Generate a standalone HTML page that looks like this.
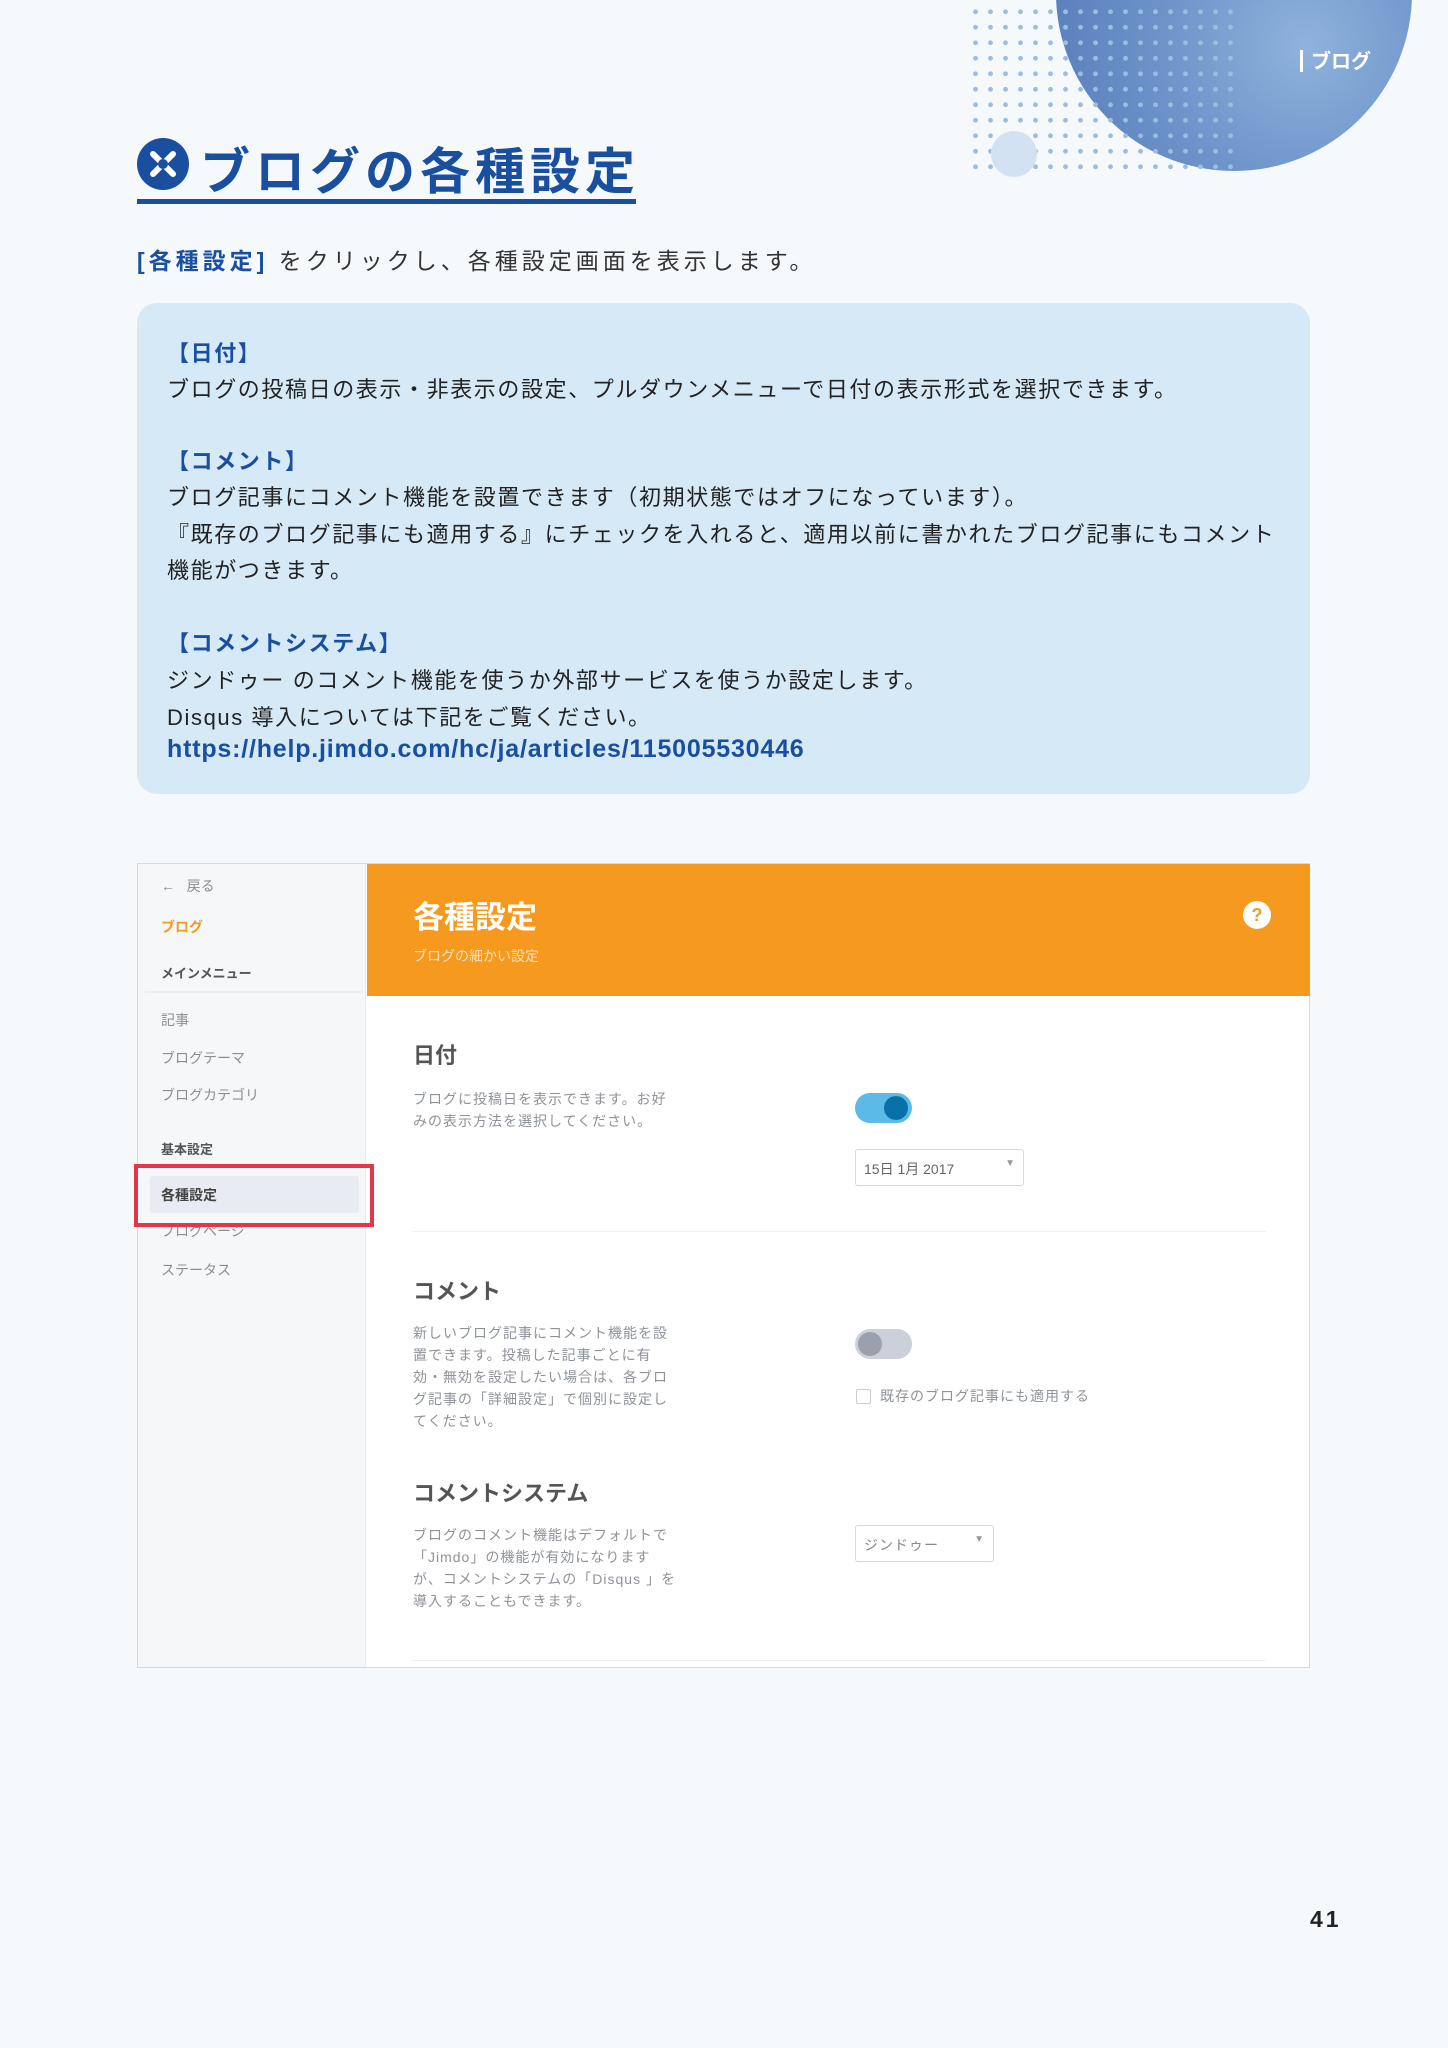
<!DOCTYPE html>
<html><head><meta charset="utf-8"><style>
*{margin:0;padding:0;box-sizing:border-box}
body{width:1448px;height:2048px;background:#f5f9fc;position:relative;overflow:hidden;font-family:"Liberation Sans","Noto Sans CJK JP",sans-serif;color:#333}
.a{position:absolute;white-space:nowrap}
.dots{position:absolute;left:968px;top:4px;width:270px;height:170px;background-image:radial-gradient(circle,#9dbde0 2.2px,transparent 2.6px);background-size:15px 15.5px}
.box{position:absolute;left:137px;top:303px;width:1173px;height:491px;background:#d5e9f6;border-radius:20px}
.bt{position:absolute;left:30px;font-size:22px;white-space:nowrap;color:#222;letter-spacing:1.6px}
.bh{color:#1a4fa0;font-weight:bold}
.sc{position:absolute;left:137px;top:863px;width:1173px;height:805px;background:#fff;border:1px solid #cfdce8}
.sb{position:absolute;left:0;top:0;width:228px;height:803px;background:#f6f7f9;border-right:1px solid #e8eaee}
.si{position:absolute;left:23px;font-size:14px;color:#8a8f96;white-space:nowrap}
.g{color:#8e939a;font-size:14px;letter-spacing:1px;line-height:22px}
.h2{font-size:22px;color:#555;font-weight:bold}
</style></head><body>
<div style="position:absolute;left:1056px;top:-185px;width:356px;height:356px;border-radius:50%;background:radial-gradient(circle at 70% 65%,#8fb3dc 0%,#6f95cb 40%,#5b80bd 75%,#6d9ed0 100%)"></div>
<div class="dots"></div>
<div style="position:absolute;left:991px;top:131px;width:46px;height:46px;border-radius:50%;background:#d3e2f2"></div>
<div class="a" style="left:1300px;top:45px;color:#fff;font-size:20px;font-weight:bold"><span style="display:inline-block;width:3px;height:22px;background:#fff;vertical-align:-4px;margin-right:8px"></span>ブログ</div>

<div style="position:absolute;left:137px;top:138px;width:52px;height:52px;border-radius:50%;background:#1a4fa0"></div>
<svg class="a" style="left:137px;top:138px" width="52" height="52" viewBox="0 0 52 52"><path d="M16 16L36 36M36 16L16 36" stroke="#fff" stroke-width="6" stroke-linecap="round"/><circle cx="26" cy="26" r="5" fill="#1a4fa0"/></svg>
<div class="a" style="left:200px;top:132px;font-size:50px;font-weight:bold;color:#1a4fa0;letter-spacing:5px">ブログの各種設定</div>
<div style="position:absolute;left:137px;top:199px;width:499px;height:5px;background:#1a4fa0"></div>
<div class="a" style="left:137px;top:242px;font-size:23px;letter-spacing:4px"><span style="color:#1a4fa0;font-weight:bold">[各種設定]</span> をクリックし、各種設定画面を表示します。</div>

<div class="box">
<div class="bt bh" style="top:33px">【日付】</div>
<div class="bt" style="top:69px">ブログの投稿日の表示・非表示の設定、プルダウンメニューで日付の表示形式を選択できます。</div>
<div class="bt bh" style="top:141px">【コメント】</div>
<div class="bt" style="top:177px">ブログ記事にコメント機能を設置できます（初期状態ではオフになっています）。</div>
<div class="bt" style="top:214px">『既存のブログ記事にも適用する』にチェックを入れると、適用以前に書かれたブログ記事にもコメント</div>
<div class="bt" style="top:250px">機能がつきます。</div>
<div class="bt bh" style="top:323px">【コメントシステム】</div>
<div class="bt" style="top:360px">ジンドゥー のコメント機能を使うか外部サービスを使うか設定します。</div>
<div class="bt" style="top:397px">Disqus 導入については下記をご覧ください。</div>
<div class="bt bh" style="top:432px;font-size:25px;letter-spacing:0.8px">https://help.jimdo.com/hc/ja/articles/115005530446</div>
</div>

<div class="sc">
<div class="sb">
<div class="si" style="top:12px">←&nbsp;&nbsp;&nbsp;戻る</div>
<div class="si" style="top:53px;color:#f59a1f;font-weight:bold">ブログ</div>
<div class="si" style="top:99px;color:#555;font-weight:bold;font-size:13px">メインメニュー</div>
<div style="position:absolute;left:7px;top:127px;width:218px;height:2px;background:#eceef1"></div>
<div class="si" style="top:146px">記事</div>
<div class="si" style="top:184px">ブログテーマ</div>
<div class="si" style="top:221px">ブログカテゴリ</div>
<div class="si" style="top:275px;color:#555;font-weight:bold;font-size:13px">基本設定</div>
<div style="position:absolute;left:12px;top:312px;width:209px;height:37px;background:#e8ebf1;border-radius:3px"></div>
<div class="si" style="top:321px;color:#444;font-weight:bold">各種設定</div>
<div class="si" style="top:357px">ブログページ</div>
<div class="si" style="top:396px">ステータス</div>
</div>
<div style="position:absolute;left:-4px;top:300px;width:240px;height:63px;border:4px solid #e43549"></div>
<div style="position:absolute;left:229px;top:0;width:943px;height:132px;background:#f59a1f"></div>
<div class="a" style="left:275px;top:28px;font-size:31px;color:#fff;font-weight:bold">各種設定</div>
<div class="a" style="left:275px;top:82px;font-size:14px;color:#fde1b8">ブログの細かい設定</div>
<div style="position:absolute;left:1105px;top:37px;width:28px;height:28px;border-radius:50%;background:#fff;color:#f59a1f;font-weight:bold;font-size:18px;text-align:center;line-height:28px">?</div>

<div class="a h2" style="left:275px;top:174px">日付</div>
<div class="a g" style="left:275px;top:224px">ブログに投稿日を表示できます。お好<br>みの表示方法を選択してください。</div>
<div style="position:absolute;left:717px;top:229px;width:57px;height:30px;border-radius:15px;background:#5bbbe6"></div>
<div style="position:absolute;left:746px;top:232px;width:24px;height:24px;border-radius:50%;background:#0a70a8"></div>
<div style="position:absolute;left:717px;top:285px;width:169px;height:37px;border:1px solid #d6d9de;border-radius:3px;font-size:14px;color:#666;padding:9px 8px">15日 1月 2017<span style="position:absolute;right:8px;top:8px;color:#999;font-size:10px">▼</span></div>
<div style="position:absolute;left:275px;top:367px;width:853px;height:1px;background:#eef0f2"></div>

<div class="a h2" style="left:275px;top:410px">コメント</div>
<div class="a g" style="left:275px;top:458px">新しいブログ記事にコメント機能を設<br>置できます。投稿した記事ごとに有<br>効・無効を設定したい場合は、各ブロ<br>グ記事の「詳細設定」で個別に設定し<br>てください。</div>
<div style="position:absolute;left:717px;top:465px;width:57px;height:30px;border-radius:15px;background:#ccd0db"></div>
<div style="position:absolute;left:720px;top:468px;width:24px;height:24px;border-radius:50%;background:#9aa0ae"></div>
<div style="position:absolute;left:718px;top:525px;width:15px;height:15px;border:1px solid #ccc;border-radius:2px"></div>
<div class="a" style="left:742px;top:522px;font-size:14px;color:#8e939a;letter-spacing:1px">既存のブログ記事にも適用する</div>

<div class="a h2" style="left:275px;top:612px">コメントシステム</div>
<div class="a g" style="left:275px;top:660px">ブログのコメント機能はデフォルトで<br>「Jimdo」の機能が有効になります<br>が、コメントシステムの「Disqus 」を<br>導入することもできます。</div>
<div style="position:absolute;left:717px;top:661px;width:139px;height:37px;border:1px solid #d6d9de;border-radius:3px;font-size:14px;color:#888;padding:9px 8px;letter-spacing:1px">ジンドゥー<span style="position:absolute;right:8px;top:8px;color:#999;font-size:10px">▼</span></div>
<div style="position:absolute;left:275px;top:796px;width:853px;height:1px;background:#eef0f2"></div>
</div>

<div class="a" style="left:1310px;top:1906px;font-size:23px;font-weight:bold;color:#222;letter-spacing:3px">41</div>
</body></html>
